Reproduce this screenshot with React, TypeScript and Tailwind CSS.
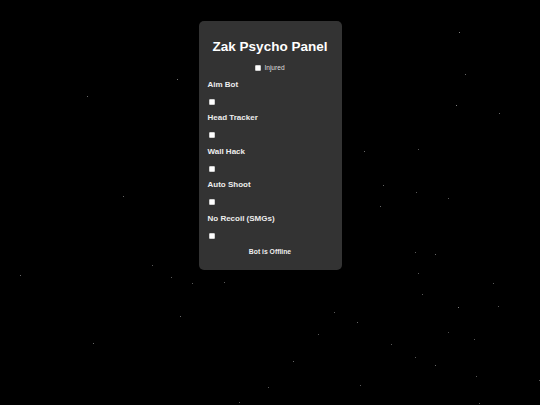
const stars: [number, number, number][] = [
  [459, 32, 0.5], [465, 74, 0.4], [456, 105, 0.5], [499, 113, 0.4], [418, 149, 0.35],
  [364, 151, 0.4], [383, 185, 0.4], [416, 192, 0.35], [448, 198, 0.35], [177, 79, 0.45],
  [87, 96, 0.4], [123, 196, 0.4], [20, 275, 0.4], [152, 265, 0.35], [171, 277, 0.35],
  [192, 283, 0.35], [224, 282, 0.35], [180, 316, 0.4], [93, 343, 0.4], [268, 387, 0.35],
  [239, 402, 0.35], [380, 206, 0.4], [415, 252, 0.35], [435, 254, 0.4], [418, 273, 0.35],
  [422, 294, 0.35], [493, 283, 0.35], [458, 307, 0.5], [498, 306, 0.35], [334, 312, 0.35],
  [357, 322, 0.4], [318, 334, 0.35], [448, 332, 0.3], [474, 339, 0.35], [391, 344, 0.35],
  [293, 361, 0.4], [415, 357, 0.35], [435, 365, 0.4], [476, 376, 0.35], [360, 385, 0.35],
  [539, 380, 0.35], [479, 403, 0.35],
]

const features = ["Aim Bot", "Head Tracker", "Wall Hack", "Auto Shoot", "No Recoil (SMGs)"]

function Box() {
  return <span className="block h-[6px] w-[6px] rounded-[1px] border border-[#d0d0d0] bg-white" />
}

export default function App() {
  return (
    <div className="relative min-h-[405px] w-full overflow-hidden bg-black font-['Liberation_Sans',Arial,sans-serif]">
      {/* starfield */}
      {stars.map(([x, y, o], i) => (
        <span
          key={i}
          className="absolute h-[1px] w-[1px] bg-white"
          style={{ left: x, top: y, opacity: o }}
        />
      ))}

      <div className="relative mx-auto mt-[21px] flex w-[143px] flex-col rounded-[5px] bg-[#333333] px-[9px] pb-[10px] pt-[18px]">
        <h1 className="flex h-[16px] items-center justify-center text-[13.5px] font-bold leading-none text-white">
          Zak Psycho Panel
        </h1>

        <div className="flex h-[21.6px] items-start justify-center pt-[9px]">
          <div className="flex h-[8px] items-center gap-[3px]">
            <Box />
            <span className="text-[6.6px] leading-none text-[#dddddd]">Injured</span>
          </div>
        </div>

        {features.map((f) => (
          <div key={f}>
            <div className="flex h-[16.75px] items-center text-[8px] font-bold leading-none text-[#eeeeee]">
              {f}
            </div>
            <div className="flex h-[16.75px] items-center pl-[1px]">
              <Box />
            </div>
          </div>
        ))}

        <div className="flex h-[16px] items-center justify-center text-[6.8px] font-bold leading-none text-[#eeeeee]">
          Bot is Offline
        </div>
      </div>
    </div>
  )
}
